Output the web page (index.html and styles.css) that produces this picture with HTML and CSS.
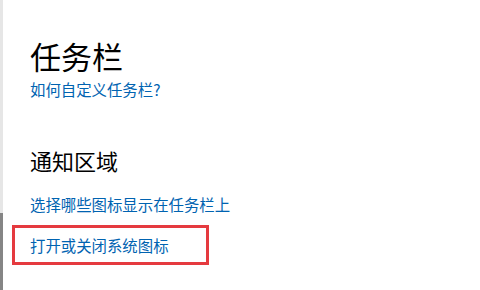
FILE: index.html
```html
<!DOCTYPE html>
<html lang="zh-CN">
<head>
<meta charset="utf-8">
<title>任务栏</title>
<link rel="stylesheet" href="styles.css">
</head>
<body>
<div class="page">
  <div class="edge">
    <div class="edge-top"></div>
    <div class="edge-thumb"></div>
  </div>
  <main class="content">
    <h1 class="title">任务栏</h1>
    <a class="link help" href="#">如何自定义任务栏?</a>
    <h2 class="section">通知区域</h2>
    <a class="link first" href="#">选择哪些图标显示在任务栏上</a>
    <div class="highlight">
      <a class="link" href="#">打开或关闭系统图标</a>
    </div>
  </main>
</div>
</body>
</html>
```
FILE: styles.css
```css
html, body {
  margin: 0;
  padding: 0;
  background: #ffffff;
}
body {
  font-family: "Microsoft YaHei", "Noto Sans CJK SC", "Noto Sans", sans-serif;
}
.page {
  display: flex;
  width: 480px;
  height: 290px;
  overflow: hidden;
}
.edge {
  width: 3px;
  display: flex;
  flex-direction: column;
}
.edge-top {
  height: 213px;
  background: #e6e6e6;
}
.edge-thumb {
  flex: 1;
  background: #858585;
}
.content {
  flex: 1;
  padding-left: 27px;
  display: flex;
  flex-direction: column;
  align-items: flex-start;
}
.title {
  margin: 40px 0 0 0;
  font-size: 31px;
  line-height: 31px;
  font-weight: 400;
  color: #000000;
}
.link {
  display: block;
  font-size: 15.4px;
  line-height: 15px;
  color: #0063b1;
  text-decoration: none;
}
.help {
  margin-top: 11px;
}
.section {
  margin: 52px 0 0 0;
  font-size: 22px;
  line-height: 22px;
  font-weight: 400;
  color: #000000;
}
.first {
  margin-top: 26px;
}
.highlight {
  box-sizing: border-box;
  width: 197px;
  margin: 13px 0 0 -18px;
  padding: 10px 0 9px 15px;
  border: 3px solid #e53a3f;
}
```
